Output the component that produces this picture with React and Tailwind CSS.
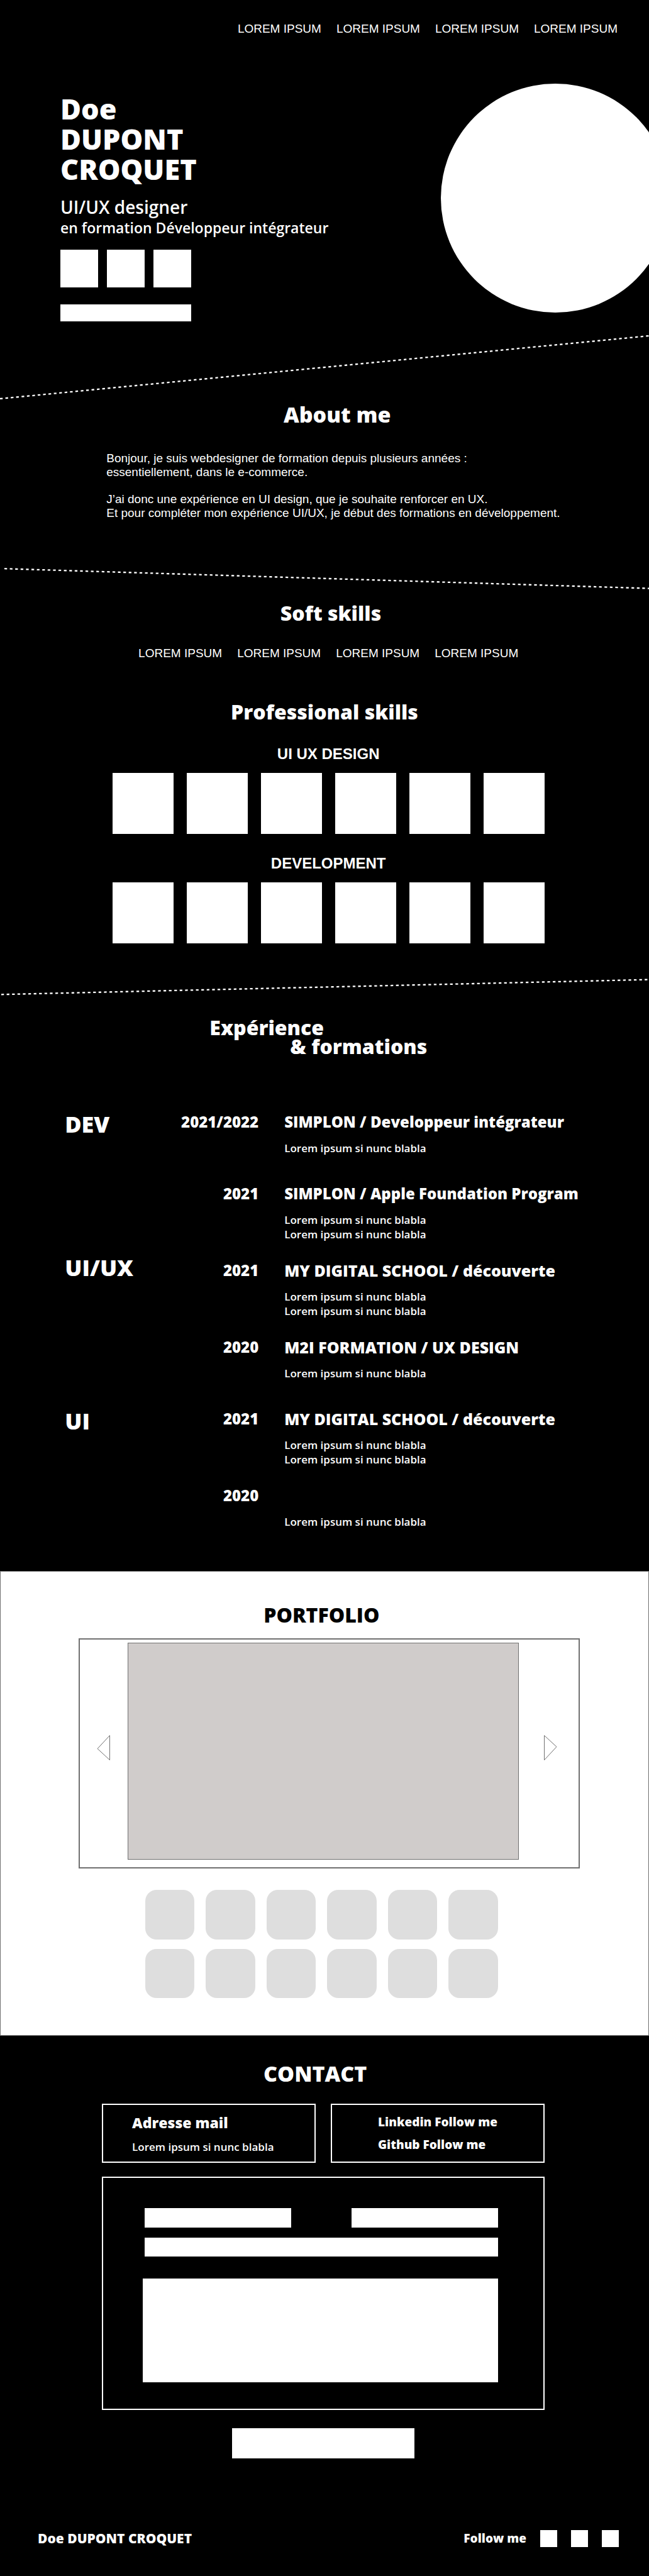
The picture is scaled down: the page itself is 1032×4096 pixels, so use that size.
const NAV = ["LOREM IPSUM", "LOREM IPSUM", "LOREM IPSUM", "LOREM IPSUM"];
const NOTE = "Lorem ipsum si nunc blabla";

const GROUPS = [
  {
    name: "DEV",
    raised: false,
    entries: [
      { year: "2021/2022", title: "SIMPLON / Developpeur intégrateur", size: "text-[24px]", notes: [NOTE] },
      { year: "2021", title: "SIMPLON / Apple Foundation Program", size: "text-[24px]", notes: [NOTE, NOTE] },
    ],
  },
  {
    name: "UI/UX",
    raised: true,
    entries: [
      { year: "2021", title: "MY DIGITAL SCHOOL / découverte", size: "text-[25px]", notes: [NOTE, NOTE] },
      { year: "2020", title: "M2I FORMATION / UX DESIGN", size: "text-[25px]", notes: [NOTE] },
    ],
  },
  {
    name: "UI",
    raised: false,
    entries: [
      { year: "2021", title: "MY DIGITAL SCHOOL / découverte", size: "text-[25px]", notes: [NOTE, NOTE] },
      { year: "2020", title: "", size: "text-[25px]", notes: [NOTE] },
    ],
  },
];

function Divider({ height, x1, y1, y2, className }) {
  return (
    <svg
      aria-hidden="true"
      viewBox={`0 0 1032 ${height}`}
      preserveAspectRatio="none"
      height={height}
      className={`block w-full ${className}`}
    >
      <line x1={x1} y1={y1} x2="1032" y2={y2} stroke="#fff" strokeWidth="2.3" strokeDasharray="4.3 4.3" />
    </svg>
  );
}

function TextLinks({ label, className }) {
  return (
    <nav aria-label={label} className={`flex gap-6 font-['Liberation_Sans',sans-serif] text-[19px] leading-6 font-normal ${className}`}>
      {NAV.map((item, i) => (
        <a key={i} href="#about" className="whitespace-nowrap">
          {item}
        </a>
      ))}
    </nav>
  );
}

function SkillRow({ title, className }) {
  return (
    <div className={className}>
      <h3 className="text-center font-['Liberation_Sans',sans-serif] text-[24px] leading-7 font-bold">{title}</h3>
      <ul className="mt-4 grid grid-cols-6 gap-[21px]">
        {[1, 2, 3, 4, 5, 6].map((n) => (
          <li key={n} className="aspect-square bg-white" />
        ))}
      </ul>
    </div>
  );
}

function Entry({ year, title, size, notes }) {
  return (
    <li className="flex min-h-[114px] gap-[41px] pb-8">
      <p className="w-[131px] shrink-0 text-right text-[24px] leading-7 font-extrabold">{year}</p>
      <div className="flex-1">
        <h4 className={`min-h-7 leading-7 font-extrabold whitespace-nowrap ${size}`}>{title}</h4>
        <div className="mt-4 text-[17px] leading-[23px] font-semibold">
          {notes.map((note, i) => (
            <p key={i}>{note}</p>
          ))}
        </div>
      </div>
    </li>
  );
}

function Arrow({ points, label, className }) {
  return (
    <button type="button" aria-label={label} className={`flex items-center justify-center self-stretch pb-3 ${className}`}>
      <svg width="22" height="42" viewBox="0 0 22 42" fill="#fff" stroke="#707070" strokeWidth="1">
        <polygon points={points} />
      </svg>
    </button>
  );
}

export default function App() {
  return (
    <div className="w-full overflow-x-hidden bg-black font-['Open_Sans',sans-serif] text-white">
      <header className="overflow-hidden pt-[34px] pb-[22px]">
        <TextLinks label="Menu" className="justify-end pr-[50px]" />
        <div className="flex items-start justify-between pl-24">
          <div className="mt-[91px]">
            <h1 className="text-[45px] leading-[48px] font-extrabold">
              Doe
              <br />
              DUPONT
              <br />
              CROQUET
            </h1>
            <p className="mt-[21px] text-[28px] leading-[30px] font-semibold">UI/UX designer</p>
            <p className="text-[23px] leading-9 font-semibold whitespace-nowrap">en formation Développeur intégrateur</p>
            <div className="mt-[17px] flex gap-[14px]">
              <a href="#social-1" aria-label="Social 1" className="size-[60px] bg-white" />
              <a href="#social-2" aria-label="Social 2" className="size-[60px] bg-white" />
              <a href="#social-3" aria-label="Social 3" className="size-[60px] bg-white" />
            </div>
            <button type="button" aria-label="CV" className="mt-[27px] block h-[27px] w-[208px] bg-white" />
          </div>
          <div className="mt-[75px] -mr-[33px] size-[364px] shrink-0 rounded-full bg-white" />
        </div>
      </header>

      <Divider height={102} x1={0} y1={101} y2={1} className="" />

      <section id="about" className="pt-1">
        <h2 className="pl-[43.7%] text-[34px] leading-10 font-extrabold">About me</h2>
        <div className="mt-[39px] flex flex-col gap-[21px] pl-[16.4%] font-['Liberation_Sans',sans-serif] text-[19px] leading-[22px]">
          <p>
            Bonjour, je suis webdesigner de formation depuis plusieurs années :
            <br />
            essentiellement, dans le e-commerce.
          </p>
          <p>
            J’ai donc une expérience en UI design, que je souhaite renforcer en UX.
            <br />
            Et pour compléter mon expérience UI/UX, je début des formations en développement.
          </p>
        </div>
      </section>

      <Divider height={34} x1={7} y1={1.2} y2={32.6} className="mt-[76px]" />

      <section className="pt-[18px]">
        <h2 className="pl-[43.2%] text-[32px] leading-10 font-extrabold">Soft skills</h2>
        <TextLinks label="Soft skills" className="mt-8 ml-[17.3%] w-[66.6%] justify-center" />
        <h2 className="mt-[61px] text-center text-[32px] leading-10 font-extrabold">Professional skills</h2>
        <div className="ml-[17.3%] w-[66.6%]">
          <SkillRow title="UI UX DESIGN" className="mt-[33px]" />
          <SkillRow title="DEVELOPMENT" className="mt-[33px]" />
        </div>
      </section>

      <Divider height={27} x1={2} y1={25.3} y2={1.6} className="mt-14" />

      <section className="pt-9 pb-5">
        <h2 className="pl-[32.3%] text-[32px] leading-[30px] font-extrabold">
          Expérience
          <span className="ml-32 block">&amp; formations</span>
        </h2>
        <div className="mt-[91px] pl-[10%]">
          {GROUPS.map((group) => (
            <div key={group.name} className="flex items-start">
              <h3 className={`w-[177px] shrink-0 text-[36px] leading-9 font-extrabold ${group.raised ? "-mt-2" : ""}`}>
                {group.name}
              </h3>
              <ul className="flex-1">
                {group.entries.map((entry, i) => (
                  <Entry key={i} {...entry} />
                ))}
              </ul>
            </div>
          ))}
        </div>
      </section>

      <section className="border border-[#707070] bg-white pt-[49px] pb-[59px] text-black">
        <h2 className="pl-[40.6%] text-[32px] leading-10 font-extrabold">PORTFOLIO</h2>
        <div className="mt-[17px] ml-[12%] flex w-[77.4%] items-center border-2 border-[#707070] pt-[5px] pb-3">
          <Arrow label="Previous" points="20.5,1.5 20.5,40.5 1,22.5" className="w-[76px]" />
          <div className="h-[345px] flex-1 border border-[#707070] bg-[#d0cccb]" />
          <Arrow label="Next" points="1.5,1.5 1.5,40.5 21,19.5" className="w-[95px] pl-1.5" />
        </div>
        <ul className="mt-[34px] ml-[22.3%] grid w-[54.5%] grid-cols-6 gap-x-[18px] gap-y-[15px]">
          {[1, 2, 3, 4, 5, 6, 7, 8, 9, 10, 11, 12].map((n) => (
            <li key={n} className="aspect-square rounded-[18px] bg-[#dedede]" />
          ))}
        </ul>
      </section>

      <section className="pt-10">
        <h2 className="pl-[40.6%] text-[34px] leading-10 font-extrabold">CONTACT</h2>
        <div className="mt-7 ml-[15.7%] w-[68.2%]">
          <div className="grid grid-cols-2 gap-6">
            <div className="border-2 border-white pt-[14px] pb-3 pl-[46px]">
              <h3 className="text-[23px] leading-7 font-extrabold">Adresse mail</h3>
              <p className="mt-[13px] text-[17px] leading-[23px] font-semibold">{NOTE}</p>
            </div>
            <div className="flex flex-col items-start gap-2 border-2 border-white pt-[13px] pl-[73px] text-[19px] leading-7 font-extrabold">
              <a href="#linkedin">Linkedin Follow me</a>
              <a href="#github">Github Follow me</a>
            </div>
          </div>
          <form className="mt-[22px]" onSubmit={(e) => e.preventDefault()}>
            <div className="border-2 border-white pt-12 pr-[72px] pb-[42px] pl-[63px]">
              <div className="pl-[3px]">
                <div className="grid grid-cols-2 gap-24">
                  <input type="text" aria-label="Nom" className="h-[31px] w-full bg-white px-2 text-black" />
                  <input type="email" aria-label="Email" className="h-[31px] w-full bg-white px-2 text-black" />
                </div>
                <input type="text" aria-label="Sujet" className="mt-4 block h-[30px] w-full bg-white px-2 text-black" />
              </div>
              <textarea aria-label="Message" className="mt-[35px] block h-[165px] w-full resize-none bg-white p-2 text-black" />
            </div>
            <button type="submit" aria-label="Envoyer" className="mx-auto mt-[29px] block h-12 w-[290px] bg-white" />
          </form>
        </div>
      </section>

      <footer className="mt-[113px] flex items-center justify-between pr-12 pb-[46px] pl-[60px] leading-7 font-extrabold">
        <p className="text-[21px]">Doe DUPONT CROQUET</p>
        <div className="flex items-center gap-[22px]">
          <p className="text-[19px]">Follow me</p>
          <a href="#social-1" aria-label="Social 1" className="size-[27px] bg-white" />
          <a href="#social-2" aria-label="Social 2" className="size-[27px] bg-white" />
          <a href="#social-3" aria-label="Social 3" className="size-[27px] bg-white" />
        </div>
      </footer>
    </div>
  );
}
